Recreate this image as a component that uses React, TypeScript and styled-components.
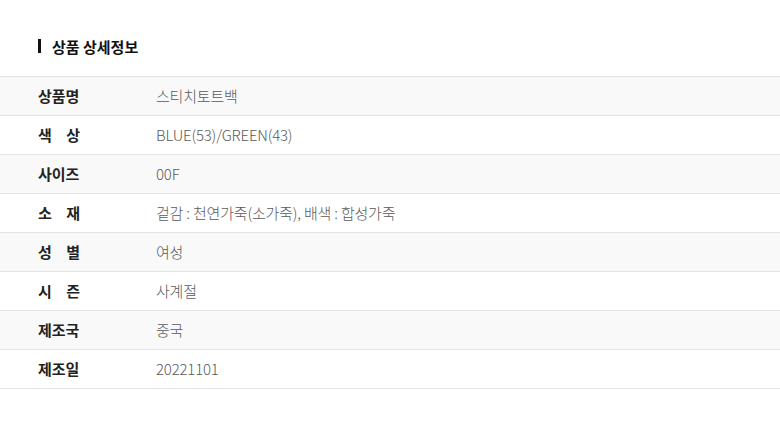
import { createGlobalStyle, styled } from "styled-components";

const GlobalStyle = createGlobalStyle`
  html, body {
    margin: 0;
    padding: 0;
    background: #ffffff;
  }
  body {
    font-family: "Noto Sans CJK KR", "Noto Sans", sans-serif;
    color: #222222;
  }
  * { box-sizing: border-box; }
`;

const Section = styled.section`
  width: 780px;
  padding-top: 36px;
`;

const Title = styled.h3`
  margin: 0 0 20px 38px;
  display: flex;
  align-items: center;
  gap: 11px;
  height: 20px;
  font-size: 15px;
  font-weight: 700;
  color: #111111;

  &::before {
    content: "";
    width: 3px;
    height: 14px;
    background: #111111;
  }
`;

const Table = styled.ul`
  list-style: none;
  margin: 0;
  padding: 0;
  border-top: 1px solid #e3e3e3;
`;

const Row = styled.li<{ $striped: boolean }>`
  display: grid;
  grid-template-columns: 156px 1fr;
  align-items: center;
  height: 39px;
  padding-bottom: 2px;
  border-bottom: 1px solid #e3e3e3;
  background: ${(p) => (p.$striped ? "#f9f9f9" : "#ffffff")};
`;

const Label = styled.span<{ $spread: boolean }>`
  margin-left: 38px;
  width: ${(p) => (p.$spread ? "42px" : "auto")};
  font-size: 15px;
  font-weight: 700;
  color: #222222;
  text-align: ${(p) => (p.$spread ? "justify" : "left")};
  text-align-last: ${(p) => (p.$spread ? "justify" : "auto")};
`;

const Value = styled.span`
  font-size: 15px;
  font-weight: 300;
  color: #5a5a5a;
  letter-spacing: -0.2px;
`;

const rows = [
  { label: "상품명", value: "스티치토트백" },
  { label: "색 상", value: "BLUE(53)/GREEN(43)" },
  { label: "사이즈", value: "00F" },
  { label: "소 재", value: "겉감 : 천연가죽(소가죽), 배색 : 합성가죽" },
  { label: "성 별", value: "여성" },
  { label: "시 즌", value: "사계절" },
  { label: "제조국", value: "중국" },
  { label: "제조일", value: "20221101" },
];

const App = () => {
  return (
    <>
      <GlobalStyle />
      <Section>
        <Title>상품 상세정보</Title>
        <Table>
          {rows.map((r, i) => (
            <Row key={r.label} $striped={i % 2 === 0}>
              <Label $spread={r.label.includes(" ")}>{r.label}</Label>
              <Value>{r.value}</Value>
            </Row>
          ))}
        </Table>
      </Section>
    </>
  );
};

export default App;
